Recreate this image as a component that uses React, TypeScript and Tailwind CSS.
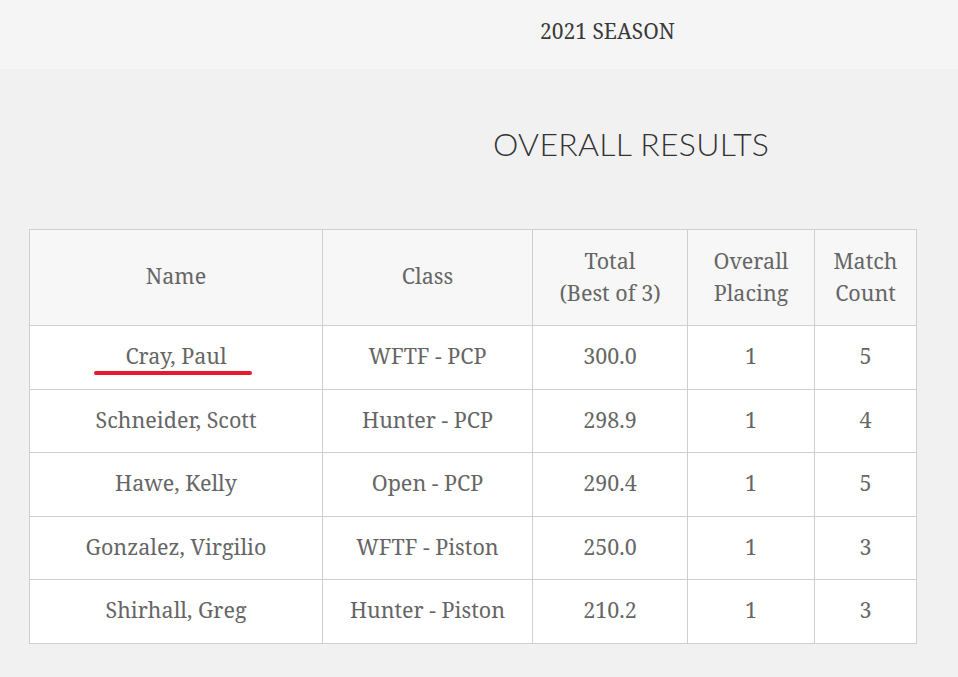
import React from 'react';

const serif = { fontFamily: '"Noto Serif", "Droid Serif", "DejaVu Serif", serif' };

const rows = [
  { name: 'Cray, Paul', cls: 'WFTF - PCP', total: '300.0', place: '1', count: '5', mark: true },
  { name: 'Schneider, Scott', cls: 'Hunter - PCP', total: '298.9', place: '1', count: '4' },
  { name: 'Hawe, Kelly', cls: 'Open - PCP', total: '290.4', place: '1', count: '5' },
  { name: 'Gonzalez, Virgilio', cls: 'WFTF - Piston', total: '250.0', place: '1', count: '3' },
  { name: 'Shirhall, Greg', cls: 'Hunter - Piston', total: '210.2', place: '1', count: '3' },
];

const App: React.FC = () => {
  return (
    <div className="min-h-screen w-[958px] bg-[#f1f1f1]">
      {/* Season bar */}
      <header className="h-[69px] bg-[#f5f5f5] flex items-center pb-[5px]">
        <div className="w-full pl-[540px] text-[21px] text-[#3a3a3a]" style={serif}>
          2021 SEASON
        </div>
      </header>

      {/* Title */}
      <h1 className="pt-[55px] pl-[493px] text-[32px] leading-[40px] font-light text-[#333] font-['Lato',sans-serif] tracking-[0.3px]">
        OVERALL RESULTS
      </h1>

      {/* Results table */}
      <div className="pt-[65px] pl-[29px]">
        <table className="border-collapse table-fixed text-[21.5px] text-[#666]" style={serif}>
          <colgroup>
            <col className="w-[293px]" />
            <col className="w-[210px]" />
            <col className="w-[155px]" />
            <col className="w-[127px]" />
            <col className="w-[102px]" />
          </colgroup>
          <thead>
            <tr className="h-[96px] bg-[#f7f7f7]">
              <th className="border border-[#cfcfcf] font-normal leading-8 pb-[3px]">Name</th>
              <th className="border border-[#cfcfcf] font-normal leading-8 pb-[3px]">Class</th>
              <th className="border border-[#cfcfcf] font-normal leading-8 pb-[2px]">
                Total
                <br />
                (Best of 3)
              </th>
              <th className="border border-[#cfcfcf] font-normal leading-8 pb-[2px]">
                Overall
                <br />
                Placing
              </th>
              <th className="border border-[#cfcfcf] font-normal leading-8 pb-[2px]">
                Match
                <br />
                Count
              </th>
            </tr>
          </thead>
          <tbody>
            {rows.map((r) => (
              <tr key={r.name} className="h-[63.5px] bg-white">
                <td className="relative border border-[#cfcfcf] text-center pb-[2px]">
                  {r.name}
                  {r.mark && (
                    <div className="absolute left-[64px] top-[45px] h-[4px] w-[158px] rounded-full bg-[#e8192c]" />
                  )}
                </td>
                <td className="border border-[#cfcfcf] text-center pb-[2px]">{r.cls}</td>
                <td className="border border-[#cfcfcf] text-center pb-[2px]">{r.total}</td>
                <td className="border border-[#cfcfcf] text-center pb-[2px]">{r.place}</td>
                <td className="border border-[#cfcfcf] text-center pb-[2px]">{r.count}</td>
              </tr>
            ))}
          </tbody>
        </table>
      </div>
    </div>
  );
};

export default App;
